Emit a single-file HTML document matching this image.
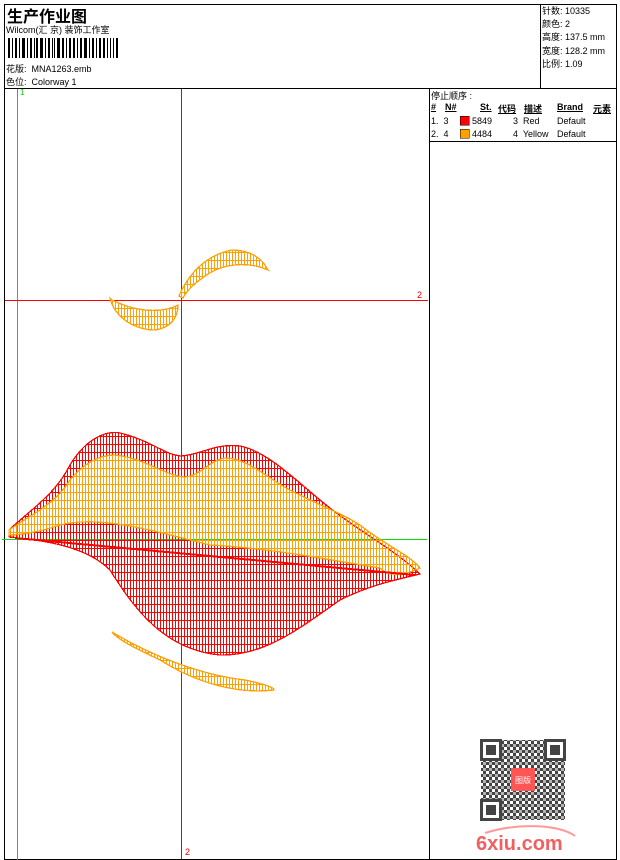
<!DOCTYPE html>
<html><head><meta charset="utf-8"><style>
html,body{margin:0;padding:0;background:#fff;}
body{width:620px;height:860px;position:relative;overflow:hidden;font-family:"Liberation Sans","Noto Sans CJK SC",sans-serif;font-size:9px;color:#000;}
.a{position:absolute;white-space:nowrap;}
</style></head><body>
<svg width="620" height="860" style="position:absolute;left:0;top:0" shape-rendering="crispEdges">
<defs>
<pattern id="pr" width="3" height="8" patternUnits="userSpaceOnUse"><line x1="1.5" y1="0" x2="1.5" y2="8" stroke="#f00" stroke-width="1.3"/><line x1="0" y1="4.5" x2="3" y2="4.5" stroke="#f00" stroke-width="1"/></pattern>
<pattern id="po" width="3" height="8" patternUnits="userSpaceOnUse"><line x1="1.5" y1="0" x2="1.5" y2="8" stroke="#ffa000" stroke-width="1.3"/><line x1="0" y1="4.5" x2="3" y2="4.5" stroke="#ffa000" stroke-width="1"/></pattern>
<pattern id="qr" width="6" height="6" patternUnits="userSpaceOnUse"><rect width="3" height="3" fill="#444"/><rect x="3" y="3" width="3" height="3" fill="#444"/><rect x="3" y="0" width="3" height="3" fill="#444" opacity="0.4"/></pattern>
</defs>
<rect x="4.5" y="4.5" width="612" height="855" fill="none" stroke="#000"/>
<line x1="540.5" y1="4" x2="540.5" y2="88" stroke="#000"/>
<line x1="4" y1="88.5" x2="617" y2="88.5" stroke="#000"/>
<line x1="429.5" y1="88" x2="429.5" y2="860" stroke="#000"/>
<line x1="429" y1="141.5" x2="617" y2="141.5" stroke="#000"/>
<g fill="#000">
<rect x="8" y="38" width="2" height="20"/><rect x="12" y="38" width="1" height="20"/><rect x="15" y="38" width="2" height="20"/><rect x="19" y="38" width="1" height="20"/><rect x="22" y="38" width="3" height="20"/><rect x="27" y="38" width="1" height="20"/><rect x="30" y="38" width="2" height="20"/><rect x="34" y="38" width="1" height="20"/><rect x="36" y="38" width="2" height="20"/><rect x="40" y="38" width="3" height="20"/><rect x="45" y="38" width="1" height="20"/><rect x="48" y="38" width="2" height="20"/><rect x="52" y="38" width="1" height="20"/><rect x="54" y="38" width="1" height="20"/><rect x="57" y="38" width="3" height="20"/><rect x="62" y="38" width="2" height="20"/><rect x="66" y="38" width="1" height="20"/><rect x="69" y="38" width="2" height="20"/><rect x="73" y="38" width="2" height="20"/><rect x="77" y="38" width="1" height="20"/><rect x="80" y="38" width="2" height="20"/><rect x="84" y="38" width="3" height="20"/><rect x="89" y="38" width="1" height="20"/><rect x="92" y="38" width="2" height="20"/><rect x="96" y="38" width="1" height="20"/><rect x="99" y="38" width="2" height="20"/><rect x="103" y="38" width="2" height="20"/><rect x="107" y="38" width="1" height="20"/><rect x="110" y="38" width="1" height="20"/><rect x="113" y="38" width="1" height="20"/><rect x="116" y="38" width="2" height="20"/>
</g>
<line x1="17.5" y1="89" x2="17.5" y2="860" stroke="#00e000"/>
<line x1="2" y1="539.5" x2="427" y2="539.5" stroke="#00e000"/>
<line x1="181.5" y1="89" x2="181.5" y2="859" stroke="#e00"/>
<line x1="5" y1="300.5" x2="428" y2="300.5" stroke="#f00"/>
<path d="M179,296 C190,270 210,254 232,250 C250,250 262,258 268,270 C250,262 225,262 205,276 C195,283 187,290 183,298 Z" fill="url(#po)" stroke="#ffa000" stroke-width="1.3"/>
<path d="M110,298 C115,318 135,330 155,330 C170,328 178,318 178,305 C165,312 140,314 112,300 Z" fill="url(#po)" stroke="#ffa000" stroke-width="1.3"/>
<path d="M112,632 C150,655 200,675 245,680 C265,684 275,688 274,690 C240,694 200,685 160,660 C135,648 118,640 112,632 Z" fill="url(#po)" stroke="#ffa000" stroke-width="1.3"/>
<path d="M9,530 C30,510 55,495 70,465 C85,440 105,430 120,433 C150,440 165,455 181,456 C200,455 215,443 240,446 C270,452 300,485 330,508 C360,532 395,550 420,574 C395,580 370,585 340,600 C300,628 265,656 220,655 C165,650 135,610 110,570 C85,545 40,540 9,537 Z" fill="url(#pr)" stroke="#f00" stroke-width="1.3"/>
<path d="M9,530 C30,515 55,505 70,480 C85,462 100,455 115,455 C145,458 165,476 185,477 C200,476 210,460 225,458 C250,458 270,482 300,495 C330,510 345,515 360,525 C385,545 410,555 420,568 C405,575 390,578 380,568 C330,560 270,548 210,545 C150,530 100,515 60,525 C40,532 20,535 9,535 Z" fill="url(#po)" stroke="#ffa000" stroke-width="1.3"/>
<path d="M15,538 C100,545 250,560 415,575" stroke="#f00" stroke-width="2" fill="none"/>
<rect x="460" y="116" width="9" height="9" fill="#f00" stroke="#000" stroke-width="0.5"/>
<rect x="460" y="129" width="9" height="9" fill="#ffa000" stroke="#000" stroke-width="0.5"/>
<rect x="481" y="740" width="84" height="80" fill="url(#qr)"/>
<g fill="#444"><rect x="480" y="739" width="22" height="22"/><rect x="544" y="739" width="22" height="22"/><rect x="480" y="799" width="22" height="22"/></g>
<g fill="#fff"><rect x="483" y="742" width="16" height="16"/><rect x="547" y="742" width="16" height="16"/><rect x="483" y="802" width="16" height="16"/></g>
<g fill="#444"><rect x="486" y="745" width="10" height="10"/><rect x="550" y="745" width="10" height="10"/><rect x="486" y="805" width="10" height="10"/></g>
<rect x="511" y="768" width="24" height="23" fill="#f55"/>
<text x="523" y="783" font-size="8" fill="#fff" text-anchor="middle" font-family="Noto Sans CJK SC,sans-serif">图版</text>
<path d="M485,833 C520,822 560,825 575,836" stroke="#f99" stroke-width="2" fill="none" shape-rendering="auto"/>
<text x="476" y="850" font-size="20" font-weight="bold" fill="#f06060" font-family="Liberation Sans,sans-serif" shape-rendering="auto">6xiu.com</text>
</svg>
<div class="a" style="left:7px;top:3px;font-size:16px;font-weight:bold;">生产作业图</div>
<div class="a" style="left:6px;top:23px;">Wilcom(汇 京) 装饰工作室</div>
<div class="a" style="left:6px;top:62px;">花版:&nbsp; MNA1263.emb</div>
<div class="a" style="left:6px;top:75px;">色位:&nbsp; Colorway 1</div>
<div class="a" style="left:542px;top:5px;line-height:13.2px;">针数: 10335<br>颜色: 2<br>高度: 137.5 mm<br>宽度: 128.2 mm<br>比例: 1.09</div>
<div class="a" style="left:20px;top:88px;color:#0c0;font-size:8px;">1</div>
<div class="a" style="left:417px;top:290px;color:#e00;font-size:9px;">2</div>
<div class="a" style="left:185px;top:847px;color:#e00;font-size:9px;">2</div>
<div class="a" style="left:431px;top:89px;">停止顺序 :</div>
<div class="a" style="left:431px;top:102px;font-weight:bold;text-decoration:underline;">#</div>
<div class="a" style="left:445px;top:102px;font-weight:bold;text-decoration:underline;">N#</div>
<div class="a" style="left:480px;top:102px;font-weight:bold;text-decoration:underline;">St.</div>
<div class="a" style="left:498px;top:102px;font-weight:bold;text-decoration:underline;">代码</div>
<div class="a" style="left:524px;top:102px;font-weight:bold;text-decoration:underline;">描述</div>
<div class="a" style="left:557px;top:102px;font-weight:bold;text-decoration:underline;">Brand</div>
<div class="a" style="left:593px;top:102px;font-weight:bold;text-decoration:underline;">元素</div>
<div class="a" style="left:431px;top:116px;">1.&nbsp; 3</div>
<div class="a" style="left:472px;top:116px;">5849</div>
<div class="a" style="left:513px;top:116px;">3&nbsp; Red</div>
<div class="a" style="left:557px;top:116px;">Default</div>
<div class="a" style="left:431px;top:129px;">2.&nbsp; 4</div>
<div class="a" style="left:472px;top:129px;">4484</div>
<div class="a" style="left:513px;top:129px;">4&nbsp; Yellow</div>
<div class="a" style="left:557px;top:129px;">Default</div>
</body></html>
